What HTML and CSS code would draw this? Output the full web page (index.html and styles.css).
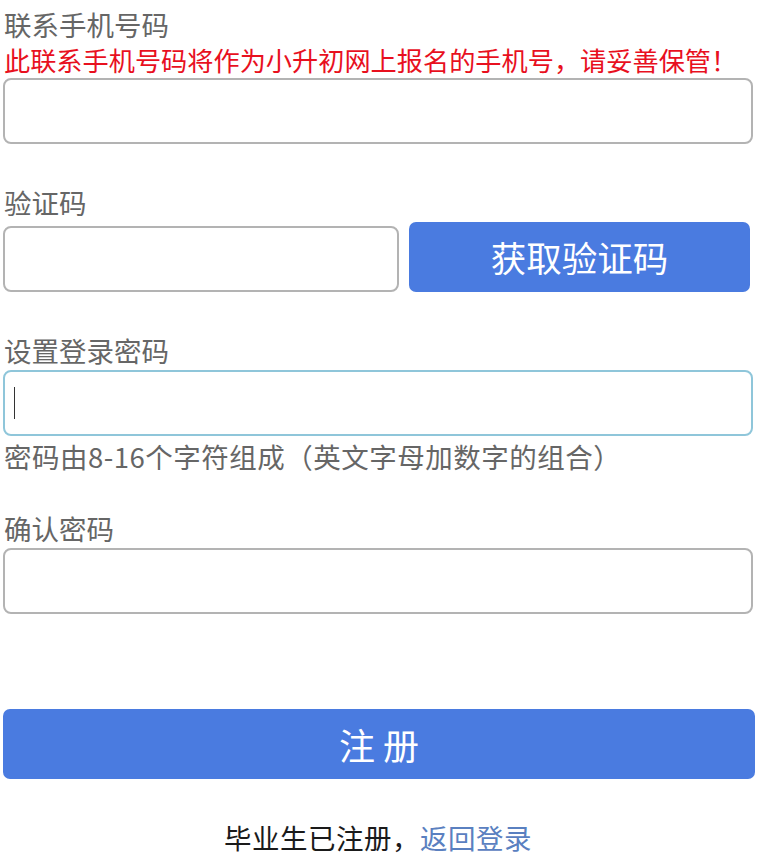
FILE: index.html
```html
<!DOCTYPE html>
<html lang="zh-CN">
<head>
<meta charset="utf-8">
<title>注册</title>
<link rel="stylesheet" href="styles.css">
</head>
<body>
<form class="form">
  <div class="field first">
    <div class="label">联系手机号码</div>
    <div class="warn">此联系手机号码将作为小升初网上报名的手机号，请妥善保管！</div>
    <input class="input" type="text">
  </div>
  <div class="field">
    <div class="label">验证码</div>
    <div class="code-row">
      <input class="input code-input" type="text">
      <button type="button" class="btn code-btn">获取验证码</button>
    </div>
  </div>
  <div class="field">
    <div class="label">设置登录密码</div>
    <div class="focus-wrap">
      <input class="input focused" type="password">
      <span class="caret"></span>
    </div>
    <div class="hint">密码由8-16个字符组成（英文字母加数字的组合）</div>
  </div>
  <div class="field confirm">
    <div class="label">确认密码</div>
    <input class="input" type="password">
  </div>
  <button type="button" class="btn submit">注 册</button>
  <div class="footer">毕业生已注册，<a class="link" href="#">返回登录</a></div>
</form>
</body>
</html>
```
FILE: styles.css
```css
html, body {
  margin: 0;
  padding: 0;
  background: #fff;
}
body {
  font-family: "Noto Sans CJK SC", "Noto Sans", sans-serif;
  color: #666;
  text-spacing-trim: space-all;
}
.form {
  padding: 6px 7px 0 3px;
  display: flex;
  flex-direction: column;
}
.field {
  display: flex;
  flex-direction: column;
  margin-top: 40px;
}
.field.first {
  margin-top: 0;
}
.field.confirm {
  margin-top: 34px;
}
.label {
  font-size: 27.5px;
  line-height: 36px;
  height: 36px;
  margin-left: 1px;
  margin-bottom: 2px;
  color: #666;
  white-space: nowrap;
}
.first .label {
  margin-bottom: 0;
}
.warn {
  font-size: 26.2px;
  line-height: 36px;
  height: 36px;
  color: #e8101e;
  margin-left: 1px;
  white-space: nowrap;
}
.input {
  box-sizing: border-box;
  width: 750px;
  height: 66px;
  margin: 0;
  border: 2px solid #b3b3b3;
  border-radius: 8px;
  background: #fff;
  outline: none;
  padding: 0 10px;
  font-size: 26px;
  font-family: inherit;
}
.code-row {
  display: flex;
  align-items: flex-end;
  gap: 10px;
}
.code-input {
  width: 396px;
}
.btn {
  border: none;
  background: #4a7be0;
  color: #fff;
  font-family: inherit;
  border-radius: 7px;
  padding: 0;
  margin: 0;
}
.code-btn {
  width: 341px;
  height: 70px;
  font-size: 35.5px;
  line-height: 70px;
}
.focus-wrap {
  position: relative;
  height: 66px;
}
.input.focused {
  border-color: #8fc6da;
}
.caret {
  position: absolute;
  left: 11px;
  top: 17px;
  width: 1px;
  height: 32px;
  background: #333;
}
.hint {
  font-size: 27.5px;
  line-height: 40px;
  height: 40px;
  margin-left: 1px;
  letter-spacing: 0.5px;
  color: #666;
  white-space: nowrap;
}
.submit {
  margin-top: 95px;
  width: 752px;
  height: 70px;
  font-size: 36px;
  line-height: 70px;
}
.footer {
  margin-top: 40px;
  text-align: center;
  font-size: 27.5px;
  line-height: 36px;
  letter-spacing: 0.5px;
  color: #1a1a1a;
}
.link {
  color: #5a80c0;
  text-decoration: none;
}
```
